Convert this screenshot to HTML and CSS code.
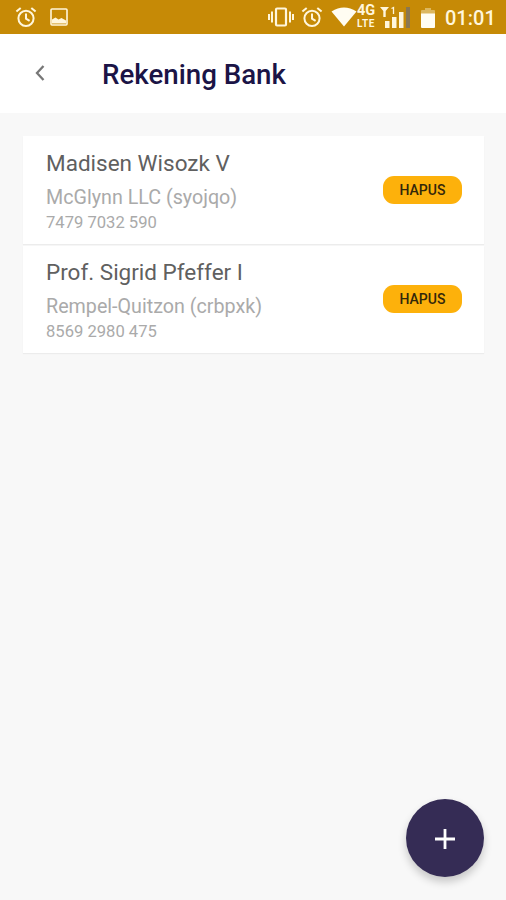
FILE: index.html
```html
<!DOCTYPE html>
<html lang="id">
<head>
<meta charset="utf-8">
<title>Rekening Bank</title>
<link rel="stylesheet" href="styles.css">
</head>
<body>
<svg width="0" height="0" class="defs">
  <symbol id="alarm" viewBox="0 0 22 22">
    <g fill="none" stroke="currentColor" stroke-width="2">
      <circle cx="11" cy="12.3" r="7.6"/>
      <path d="M11 7.6v5l3.6 2.3M1.4 5.6l4.3-3.7M20.6 5.6l-4.3-3.7"/>
    </g>
  </symbol>
</svg>
<div class="status">
  <div class="status-left">
    <svg class="alarm"><use href="#alarm"/></svg>
    <svg class="photo" viewBox="0 0 18 18"><rect x="1" y="1" width="16" height="16" rx="1" fill="none" stroke="currentColor" stroke-width="1.6"/><path d="M2 15.500v-4l3.500-2 3 2 3-1.500 4.500 2.500v3z" fill="currentColor"/></svg>
  </div>
  <div class="status-right">
    <svg class="vibrate" viewBox="0 0 26 20"><path d="M1 7v6M4 4.500v11M25 7v6M22 4.500v11" stroke="currentColor" stroke-width="2"/><rect x="8" y="1.500" width="10" height="17" rx="1" fill="none" stroke="currentColor" stroke-width="2.200"/></svg>
    <svg class="alarm"><use href="#alarm"/></svg>
    <svg class="wifi" viewBox="0 0 26 20"><path d="M.5 4.500Q13-3.500 25.500 4.500L13 19.500z" fill="currentColor"/></svg>
    <div class="network"><span class="gen">4G</span><span class="lte">LTE</span></div>
    <svg class="signal" viewBox="0 0 30 23"><path d="M0 1h9L5.700 5v6H3.300V5zM5 15h4.500v7H5zM12 11h4.500v11H12zM19 6h4.500v16H19z" fill="currentColor"/><path d="M11.500 2.500l2-1V8" fill="none" stroke="currentColor" stroke-width="1.300"/><path d="M26 1h4v21h-4z" class="signal-off"/></svg>
    <svg class="battery" viewBox="0 0 14 20"><path d="M4 0h6v2h3q1 0 1 1v3H0V3q0-1 1-1h3z" class="battery-empty"/><path d="M0 5.500h14V19q0 1-1 1H1q-1 0-1-1z" fill="currentColor"/></svg>
    <span class="clock">01:01</span>
  </div>
</div>
<header class="bar">
  <svg class="back" viewBox="0 0 12 18"><path d="M10.500 2L4 9l6.500 7" fill="none" stroke="currentColor" stroke-width="2.300"/></svg>
  <h1 class="title">Rekening Bank</h1>
</header>
<main class="accounts">
  <section class="card">
    <div class="info">
      <div class="name">Madisen Wisozk V</div>
      <div class="bank">McGlynn LLC (syojqo)</div>
      <div class="number">7479 7032 590</div>
    </div>
    <button class="remove">HAPUS</button>
  </section>
  <section class="card">
    <div class="info">
      <div class="name">Prof. Sigrid Pfeffer I</div>
      <div class="bank">Rempel-Quitzon (crbpxk)</div>
      <div class="number">8569 2980 475</div>
    </div>
    <button class="remove">HAPUS</button>
  </section>
</main>
<button class="add" aria-label="Tambah"><svg class="plus" viewBox="0 0 22 22"><path d="M11 1v20M1 11h20" stroke="currentColor" stroke-width="2.800"/></svg></button>
</body>
</html>
```

FILE: styles.css
```css
* { box-sizing: border-box; }
body {
  margin: 0;
  height: 900px;
  overflow: hidden;
  background: #f8f8f8;
  font-family: Roboto, "Liberation Sans", sans-serif;
}
svg { display: block; flex: none; }
.defs { position: absolute; }
button { border: 0; padding: 0; font-family: inherit; }

.status {
  display: flex;
  justify-content: space-between;
  height: 34px;
  padding: 0 11px 0 15px;
  background: #c68a06;
  color: #fff6dc;
}
.status-left, .status-right { display: flex; align-items: center; }
.alarm { width: 22px; height: 22px; }
.photo { width: 18px; height: 18px; margin-left: 13px; }
.vibrate { width: 26px; height: 20px; margin-right: 7px; }
.wifi { width: 26px; height: 20px; margin-left: 8px; color: #fffdf2; }
.network { width: 22px; font-weight: 700; }
.gen { display: block; font-size: 14.500px; line-height: 14px; }
.lte { display: block; font-size: 10px; line-height: 12px; letter-spacing: .6px; }
.signal { width: 30px; height: 23px; margin-left: 1px; }
.signal-off { fill: #8a7751; }
.battery { width: 14px; height: 20px; margin: 2px 0 0 11px; color: #fffdf2; }
.battery-empty { fill: #dcb75e; }
.clock {
  width: 50px;
  margin: 2px 0 0 10px;
  font-size: 20px;
  font-weight: 500;
  line-height: 24px;
  white-space: nowrap;
}

.bar {
  display: flex;
  align-items: center;
  height: 79px;
  padding-left: 33px;
  background: #fff;
}
.back { width: 12px; height: 18px; margin-bottom: 2px; color: #777; }
.title {
  margin: 2px 0 0 57px;
  color: #1b1446;
  font-size: 27.700px;
  font-weight: 500;
  line-height: 32px;
}

.accounts { padding: 23px 22px 0 23px; }
.card {
  display: flex;
  align-items: center;
  justify-content: space-between;
  height: 107.500px;
  margin-bottom: 2px;
  padding: 0 22px 0 23px;
  background: #fff;
  box-shadow: 0 1px 1px #ececec;
}
.info { margin-top: 3px; white-space: nowrap; }
.name { color: #606060; font-size: 22.500px; line-height: 28px; }
.bank { margin-top: 8px; color: #aaa; font-size: 19.700px; line-height: 25px; }
.number { margin-top: 2px; color: #aaa; font-size: 16.600px; line-height: 22px; }
.remove {
  width: 79px;
  height: 28px;
  border-radius: 11px;
  background: #fdb10b;
  color: #33270a;
  font-size: 14px;
  font-weight: 500;
}

.add {
  position: fixed;
  left: 406px;
  top: 799px;
  display: flex;
  align-items: center;
  justify-content: center;
  width: 78px;
  height: 78px;
  border-radius: 50%;
  background: #352c55;
  color: #fff;
  box-shadow: 0 5px 9px rgba(0, 0, 0, .2);
}
.plus { width: 22px; height: 22px; margin-top: 1px; }
```
